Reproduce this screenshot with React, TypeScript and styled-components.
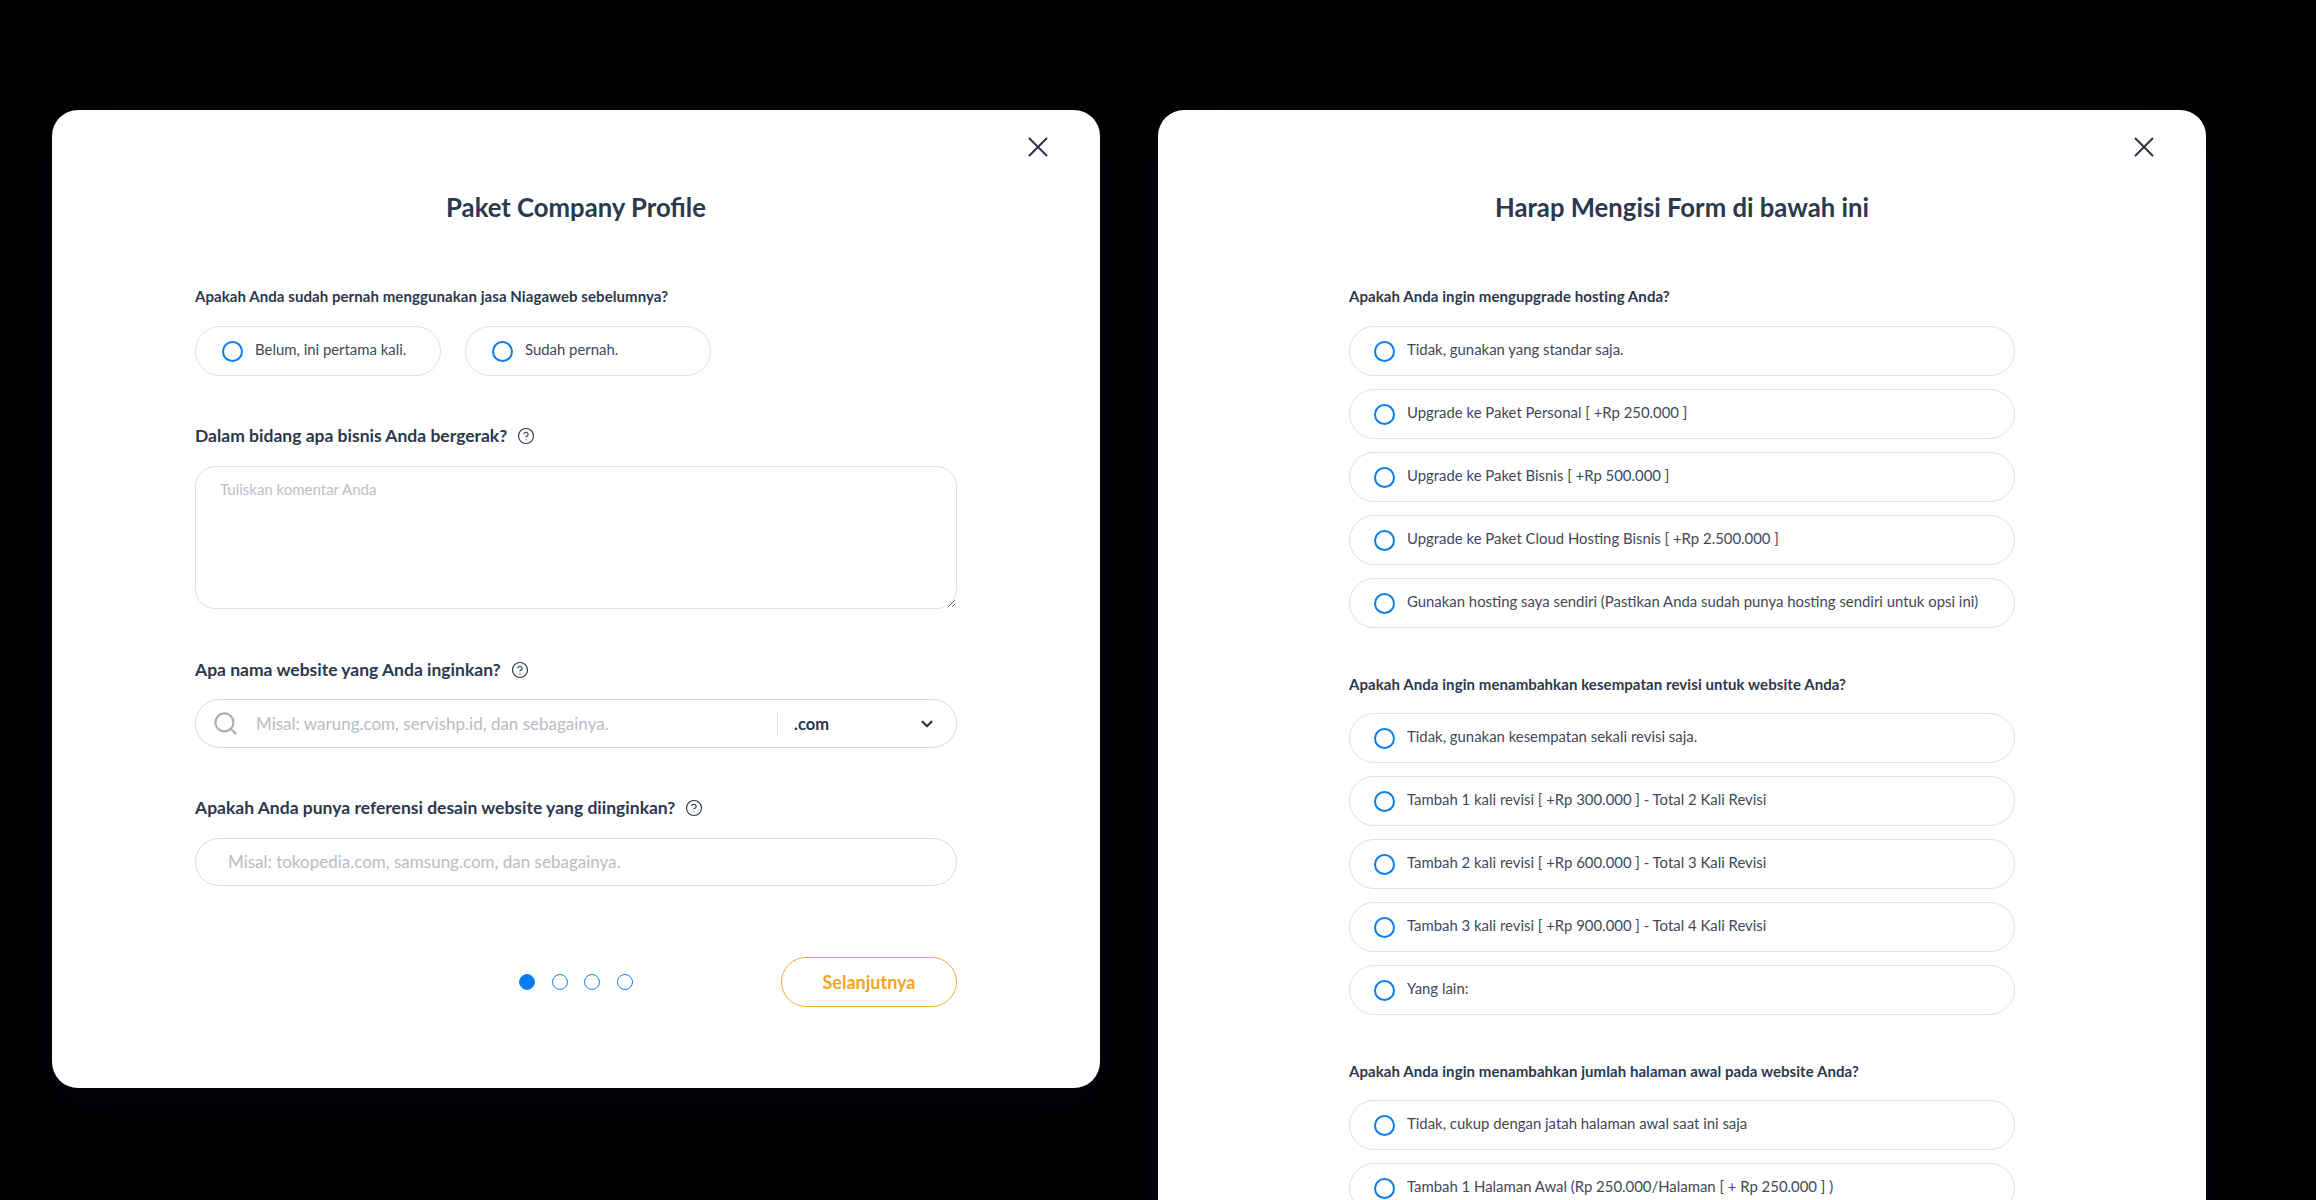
import React from "react";
import styled, { createGlobalStyle } from "styled-components";
import { CircleHelp, ChevronDown, Search, X } from "lucide-react";

const Global = createGlobalStyle`
  html, body { margin: 0; padding: 0; background: #000; height: 1200px; overflow: hidden; }
  * { box-sizing: border-box; }
  body { font-family: "Lato", "Noto Sans", sans-serif; }
`;

const Stage = styled.div`
  display: flex;
  align-items: flex-start;
  gap: 58px;
  padding: 110px 0 0 52px;
  height: 1200px;
  overflow: hidden;
  background: #000;
`;

const Card = styled.section<{ $pad: number }>`
  position: relative;
  width: 1048px;
  flex: none;
  padding: 80px ${(p) => p.$pad}px 81px;
  background: #fff;
  border-radius: 26px;
  box-shadow: 0 16px 50px rgba(10, 60, 130, 0.09);
`;

const Close = styled.button`
  position: absolute;
  top: 20px;
  right: 45px;
  width: 34px;
  height: 34px;
  padding: 0;
  border: 0;
  background: none;
  color: #2a3447;
  display: flex;
  align-items: center;
  justify-content: center;
`;

const Title = styled.h1`
  margin: 0;
  height: 36px;
  font-size: 25.7px;
  line-height: 35px;
  font-weight: 700;
  color: #2c384d;
  text-align: center;
`;

const SmallLabel = styled.h2<{ $top: number; $bottom: number }>`
  margin: ${(p) => p.$top}px 0 ${(p) => p.$bottom}px;
  height: 20px;
  font-size: 15px;
  line-height: 20px;
  font-weight: 700;
  letter-spacing: 0.07px;
  color: #2c384d;
`;

const BigLabel = styled.h2<{ $top: number; $bottom?: number }>`
  display: flex;
  align-items: center;
  gap: 10px;
  margin: ${(p) => p.$top}px 0 ${(p) => p.$bottom ?? 18}px;
  height: 22px;
  font-size: 17.5px;
  line-height: 22px;
  font-weight: 700;
  color: #2c384d;
`;

const PillRow = styled.div`
  display: flex;
  gap: 24px;
`;

const OptionList = styled.div`
  display: flex;
  flex-direction: column;
  gap: 13px;
`;

const Option = styled.label<{ $width?: number; $inset: number }>`
  display: flex;
  align-items: center;
  gap: 12px;
  width: ${(p) => (p.$width ? `${p.$width}px` : "100%")};
  height: 50px;
  padding-left: ${(p) => p.$inset}px;
  border: 1.5px solid #dfe1e5;
  border-radius: 25px;
  background: #fff;
`;

const Radio = styled.span`
  flex: none;
  width: 21px;
  height: 21px;
  border: 2.2px solid #0d7de8;
  border-radius: 50%;
`;

const OptionText = styled.span`
  position: relative;
  top: -2px;
  font-size: 14.9px;
  line-height: 20px;
  color: #3f4859;
  white-space: nowrap;
`;

const TextArea = styled.textarea`
  display: block;
  width: 100%;
  height: 143px;
  padding: 12px 24px;
  border: 1.5px solid #dfe1e5;
  border-radius: 20px;
  outline: none;
  font-family: inherit;
  font-size: 15px;
  line-height: 20px;
  color: #3f4859;
  &::placeholder { color: #bcc0c6; opacity: 1; }
`;

const FieldShell = styled.div<{ $height: number }>`
  display: flex;
  align-items: center;
  width: 100%;
  height: ${(p) => p.$height}px;
  border: 1.5px solid #d8dadf;
  border-radius: 26px;
  background: #fff;
`;

const SearchSlot = styled.span`
  display: flex;
  flex: none;
  width: 60px;
  padding-left: 16px;
  color: #a8acb2;
`;

const Field = styled.input<{ $inset?: number }>`
  flex: 1;
  min-width: 0;
  height: 100%;
  padding: 0 0 1px ${(p) => p.$inset ?? 0}px;
  border: 0;
  outline: none;
  background: none;
  font-family: inherit;
  font-size: 17px;
  color: #3f4859;
  &::placeholder { color: #b8bcc2; opacity: 1; }
`;

const Select = styled.div`
  display: flex;
  align-items: center;
  justify-content: space-between;
  flex: none;
  width: 179px;
  height: 25px;
  padding: 0 20px 0 16px;
  border-left: 1.5px solid #e2e4e8;
  font-size: 16.5px;
  font-weight: 700;
  color: #2a3548;
`;

const Footer = styled.footer`
  display: grid;
  grid-template-columns: 1fr auto 1fr;
  align-items: center;
  margin-top: 71px;
`;

const Dots = styled.div`
  grid-column: 2;
  display: flex;
  gap: 16.5px;
`;

const Dot = styled.span<{ $active?: boolean }>`
  width: 16px;
  height: 16px;
  border-radius: 50%;
  border: 1.5px solid #1a82ec;
  background: ${(p) => (p.$active ? "#0a7bf5" : "transparent")};
`;

const NextButton = styled.button`
  grid-column: 3;
  justify-self: end;
  width: 176px;
  height: 50px;
  border: 1.5px solid #f2ab3c;
  border-radius: 25px;
  background: #fff;
  font-family: inherit;
  font-size: 18px;
  font-weight: 700;
  color: #f4a422;
`;

const Help = () => <CircleHelp size={18} strokeWidth={1.5} color="#2a3548" />;

type Props = { texts: string[] };
const Options = ({ texts }: Props) => (
  <OptionList>
    {texts.map((t) => (
      <Option key={t} $inset={24}>
        <Radio />
        <OptionText>{t}</OptionText>
      </Option>
    ))}
  </OptionList>
);

export default function App() {
  return (
    <Stage>
      <Global />
      <Card $pad={143}>
        <Close aria-label="Tutup"><X size={34} strokeWidth={1.4} /></Close>
        <Title>Paket Company Profile</Title>
        <SmallLabel $top={60} $bottom={20}>Apakah Anda sudah pernah menggunakan jasa Niagaweb sebelumnya?</SmallLabel>
        <PillRow>
          <Option $width={246} $inset={26}><Radio /><OptionText>Belum, ini pertama kali.</OptionText></Option>
          <Option $width={246} $inset={26}><Radio /><OptionText>Sudah pernah.</OptionText></Option>
        </PillRow>
        <BigLabel $top={49} $bottom={19}>Dalam bidang apa bisnis Anda bergerak? <Help /></BigLabel>
        <TextArea placeholder="Tuliskan komentar Anda" />
        <BigLabel $top={50}>Apa nama website yang Anda inginkan? <Help /></BigLabel>
        <FieldShell $height={49}>
          <SearchSlot><Search size={27} strokeWidth={1.9} /></SearchSlot>
          <Field placeholder="Misal: warung.com, servishp.id, dan sebagainya." />
          <Select>.com <ChevronDown size={18} strokeWidth={3} /></Select>
        </FieldShell>
        <BigLabel $top={49} $bottom={19}>Apakah Anda punya referensi desain website yang diinginkan? <Help /></BigLabel>
        <FieldShell $height={48}>
          <Field $inset={32} placeholder="Misal: tokopedia.com, samsung.com, dan sebagainya." />
        </FieldShell>
        <Footer>
          <Dots><Dot $active /><Dot /><Dot /><Dot /></Dots>
          <NextButton>Selanjutnya</NextButton>
        </Footer>
      </Card>
      <Card $pad={191}>
        <Close aria-label="Tutup"><X size={34} strokeWidth={1.4} /></Close>
        <Title>Harap Mengisi Form di bawah ini</Title>
        <SmallLabel $top={60} $bottom={20}>Apakah Anda ingin mengupgrade hosting Anda?</SmallLabel>
        <Options texts={[
          "Tidak, gunakan yang standar saja.",
          "Upgrade ke Paket Personal [ +Rp 250.000 ]",
          "Upgrade ke Paket Bisnis [ +Rp 500.000 ]",
          "Upgrade ke Paket Cloud Hosting Bisnis [ +Rp 2.500.000 ]",
          "Gunakan hosting saya sendiri (Pastikan Anda sudah punya hosting sendiri untuk opsi ini)",
        ]} />
        <SmallLabel $top={46} $bottom={19}>Apakah Anda ingin menambahkan kesempatan revisi untuk website Anda?</SmallLabel>
        <Options texts={[
          "Tidak, gunakan kesempatan sekali revisi saja.",
          "Tambah 1 kali revisi [ +Rp 300.000 ] - Total 2 Kali Revisi",
          "Tambah 2 kali revisi [ +Rp 600.000 ] - Total 3 Kali Revisi",
          "Tambah 3 kali revisi [ +Rp 900.000 ] - Total 4 Kali Revisi",
          "Yang lain:",
        ]} />
        <SmallLabel $top={46} $bottom={19}>Apakah Anda ingin menambahkan jumlah halaman awal pada website Anda?</SmallLabel>
        <Options texts={[
          "Tidak, cukup dengan jatah halaman awal saat ini saja",
          "Tambah 1 Halaman Awal (Rp 250.000/Halaman [ + Rp 250.000 ] )",
        ]} />
      </Card>
    </Stage>
  );
}
